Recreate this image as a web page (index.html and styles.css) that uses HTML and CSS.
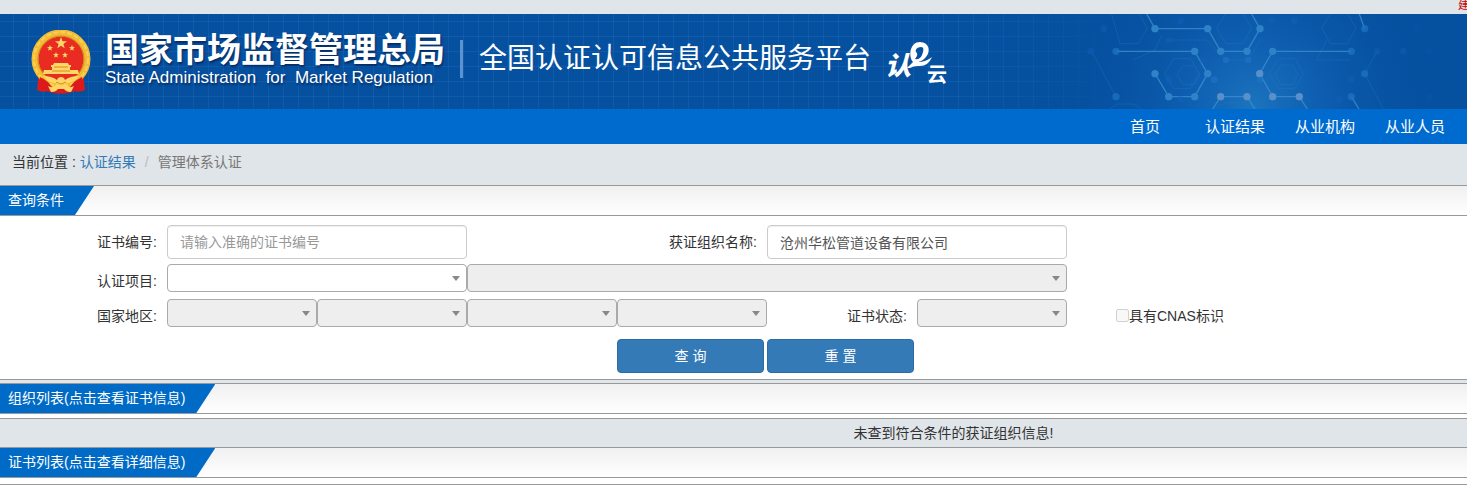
FILE: index.html
```html
<!DOCTYPE html>
<html lang="zh-CN">
<head>
  <meta charset="UTF-8">
  <meta name="viewport" content="width=device-width, initial-scale=1.0">
  <title>全国认证认可信息公共服务平台</title>
  <link rel="stylesheet" href="styles.css">
</head>
<body>
<div class="topbar"><span class="notice">建</span></div>

<header class="header">
  <svg class="emblem" viewBox="0 0 60 64" aria-hidden="true">
    <path d="M8 42 L6 60 Q11 63 16 61 Q30 66 44 61 Q49 63 54 60 L52 42Z" fill="#dc1a1c"/>
    <path d="M10 50 l2 11 M50 50 l-2 11" stroke="#a00f16" stroke-width="1"/>
    <circle cx="30" cy="29" r="26" fill="#e92b22" stroke="#f3bb35" stroke-width="7"/>
    <circle cx="30" cy="29" r="27" fill="none" stroke="#fbd153" stroke-width="2" stroke-dasharray="5 2"/>
    <circle cx="30" cy="29" r="23" fill="none" stroke="#c98518" stroke-width="1"/>
    <path d="M9 47 Q17 50 22 59 H38 Q43 50 51 47 L53 60 Q49 62 44 61 Q30 66 16 61 Q11 62 7 60z" fill="#dc1a1c"/>
    <g fill="#ffd766">
      <path d="M30 7 l1.5 4.2 4.5 .1 -3.6 2.7 1.3 4.3 -3.7 -2.5 -3.7 2.5 1.3 -4.3 -3.6 -2.7 4.5 -.1z"/>
      <path id="star" d="M19 15 l.8 2.1 2.2 .1 -1.8 1.4 .7 2.2 -1.9 -1.3 -1.9 1.3 .7 -2.2 -1.8 -1.4 2.2 -.1z"/>
      <use href="#star" x="22"/>
      <use href="#star" x="6" y="7"/>
      <use href="#star" x="15" y="7"/>
      <path d="M23 33 h14 l1 2 h2 v2 h-1 v3 h8 l1 4 H12 l1 -4 h8 v-3 h-1 v-2 h2z"/>
      <path d="M12 46 Q21 46 26 50 Q27 47 30 47 Q33 47 34 50 Q39 46 48 46 Q43 53 36 53 L30 55 L24 53 Q17 53 12 46z"/>
      <path d="M17 56 Q22 59 26 54 L30 56 L34 54 Q38 59 43 56 L40 62 Q35 62 33 59 H27 Q25 62 20 62z"/>
    </g>
    <path d="M23 37 h14 M21 41 h18 M25 52 l5 2 l5 -2" fill="none" stroke="#d98b20" stroke-width="1"/>
  </svg>
  <div class="agency">
    <div class="agency-name">国家市场监督管理总局</div>
    <div class="agency-en">State Administration&nbsp; for&nbsp; Market Regulation</div>
  </div>
  <h1 class="platform">全国认证认可信息公共服务平台</h1>
  <div class="cloud-logo">
    <span class="cloud-ren">认</span>
    <svg class="cloud-e" viewBox="0 0 26 28" aria-hidden="true">
      <path fill-rule="evenodd" d="M0 27 Q3 24 6 21 C1 15 3 1 13 1 C22 1 24 10 19 16 Q16 20 11 21 Q19 21 25 16 Q21 26 11 25 Q6 25 3 27z M8 18 Q13 19 15 14 C17 9 17 6 14 6 C10 6 8 9 9 11 Q12 13 8 18z" fill="#fff"/>
    </svg>
    <span class="cloud-yun">云</span>
  </div>
  <svg class="molecule" viewBox="0 42 1281 285" aria-hidden="true">
    <defs>
      <radialGradient id="glow" gradientUnits="userSpaceOnUse" cx="640" cy="320" r="560">
        <stop offset="0" stop-color="#1b74bd"/>
        <stop offset=".35" stop-color="#0f60b3" stop-opacity=".9"/>
        <stop offset="1" stop-color="#0650a0" stop-opacity="0"/>
      </radialGradient>
    </defs>
    <rect y="42" width="1281" height="285" fill="url(#glow)"/>
    <g fill="none" stroke="#2c7fc4" stroke-width="3" opacity=".3">
      <path d="M530 85 L558 40 H608 L635 85 L608 131 H558z M845 85 L872 40 H922 L948 85 L922 131 H872z"/>
      <path d="M374 221 L401 176 H452 L477 221 L452 266 H401z M412 224 L429 198 H463 L480 224 L463 254 H429z"/>
      <path d="M688 221 L715 176 H765 L790 221 L765 266 H715z M706 224 L722 195 H758 L774 224 L758 254 H722z"/>
      <path d="M215 42 L240 131 H295 L322 85 L298 42 M158 160 L228 290 M974 221 L1012 154 M974 221 L1030 327 M520 327 L558 308 H625 L650 327 M210 327 L232 312 H282 L302 327"/>
      <path d="M365 105 L345 150 L280 180 M386 120 H500 L558 180 H625 L660 121 M860 120 L830 180 H930"/>
    </g>
    <g fill="none" stroke="#3f91cf" stroke-width="4" opacity=".75">
      <path d="M320 42 L345 86 H503 L542 154 H621 L660 86 L635 42"/>
      <path d="M228 154 H464 L503 221 L464 290 H386 L345 221"/>
      <path d="M934 154 H698 L659 221 L698 290 H778 L802 327"/>
      <path d="M518 327 L542 290 H621 L645 327 M958 42 L974 86 M934 290 L957 327"/>
    </g>
    <g fill="#2e83c8">
      <circle cx="345" cy="86" r="11"/><circle cx="503" cy="86" r="11"/>
      <circle cx="660" cy="86" r="11"/><circle cx="542" cy="154" r="11"/>
      <circle cx="621" cy="154" r="11"/><circle cx="464" cy="154" r="11"/>
      <circle cx="698" cy="154" r="11"/><circle cx="503" cy="221" r="11"/>
      <circle cx="345" cy="221" r="11"/><circle cx="386" cy="290" r="11"/>
      <circle cx="464" cy="290" r="11"/>
    </g>
    <g fill="#5b8fca">
      <circle cx="659" cy="221" r="11"/><circle cx="542" cy="290" r="11"/>
      <circle cx="621" cy="290" r="11"/><circle cx="698" cy="290" r="11"/>
      <circle cx="778" cy="290" r="11"/>
    </g>
    <g fill="#1f73c4" opacity=".7">
      <circle cx="228" cy="154" r="11"/><circle cx="228" cy="290" r="11"/>
      <circle cx="934" cy="154" r="11"/><circle cx="974" cy="86" r="11"/>
      <circle cx="974" cy="221" r="11"/><circle cx="934" cy="290" r="11"/>
      <circle cx="558" cy="180" r="10"/><circle cx="625" cy="180" r="10"/>
      <circle cx="523" cy="239" r="10"/><circle cx="660" cy="240" r="10"/>
    </g>
    <g fill="#1263bd" opacity=".4">
      <circle cx="191" cy="86" r="10"/><circle cx="152" cy="154" r="10"/>
      <circle cx="1012" cy="154" r="10"/><circle cx="1090" cy="154" r="10"/>
      <circle cx="694" cy="62" r="10"/>
      <circle cx="763" cy="62" r="10"/><circle cx="660" cy="121" r="10"/>
      <circle cx="490" cy="180" r="10"/><circle cx="490" cy="298" r="10"/>
      <circle cx="422" cy="298" r="10"/><circle cx="386" cy="239" r="10"/>
      <circle cx="897" cy="298" r="10"/><circle cx="934" cy="239" r="10"/>
      <circle cx="422" cy="62" r="10"/><circle cx="386" cy="121" r="10"/>
    </g>
    <g fill="#1263bd" opacity=".15">
      <circle cx="1168" cy="154" r="10"/><circle cx="1130" cy="86" r="10"/>
      <circle cx="1168" cy="290" r="10"/>
    </g>
  </svg>
</header>

<nav class="nav">
  <a href="#">首页</a>
  <a href="#">认证结果</a>
  <a href="#">从业机构</a>
  <a href="#">从业人员</a>
</nav>

<div class="breadcrumb">
  <span>当前位置 :</span>
  <a href="#">认证结果</a>
  <span class="slash">/</span>
  <span class="current">管理体系认证</span>
</div>

<h2 class="section-title"><span>查询条件</span></h2>
<form class="search-form">
  <div class="row">
    <label for="certNo">证书编号:</label>
    <input class="text-input span-2" id="certNo" type="text" placeholder="请输入准确的证书编号">
    <label class="span-2" for="orgName">获证组织名称:</label>
    <input class="text-input span-2" id="orgName" type="text" value="沧州华松管道设备有限公司">
  </div>
  <div class="row row-select">
    <label for="project">认证项目:</label>
    <select class="span-2" id="project"></select>
    <select class="span-4" aria-label="认证项目" disabled></select>
  </div>
  <div class="row row-select">
    <label for="country">国家地区:</label>
    <select id="country" disabled></select>
    <select aria-label="省" disabled></select>
    <select aria-label="市" disabled></select>
    <select aria-label="区县" disabled></select>
    <label for="status">证书状态:</label>
    <select id="status" disabled></select>
    <div class="check span-2">
      <input id="cnas" type="checkbox" disabled>
      <label for="cnas">具有CNAS标识</label>
    </div>
  </div>
  <div class="row row-buttons">
    <button class="btn btn-search" type="button">查 询</button>
    <button class="btn" type="button">重 置</button>
  </div>
</form>

<h2 class="section-title"><span>组织列表(点击查看证书信息)</span></h2>
<div class="result">
  <p>未查到符合条件的获证组织信息!</p>
</div>

<h2 class="section-title"><span>证书列表(点击查看详细信息)</span></h2>
<div class="result result-empty"></div>
</body>
</html>
```
FILE: styles.css
```css
* {
  box-sizing: border-box;
  margin: 0;
  padding: 0;
}

body {
  background-color: #e0e5e9;
  color: #333;
  font-family: "Liberation Sans", "Noto Sans CJK SC", sans-serif;
  font-size: 14px;
  line-height: 20px;
}

a {
  text-decoration: none;
}

input,
select,
button {
  font: inherit;
}

.topbar {
  display: flex;
  justify-content: flex-end;
  height: 14px;
  overflow: hidden;
}

/* notice runs past the right edge */
.notice {
  width: 9px;
  color: #c00;
  font-size: 12px;
  line-height: 10px;
  white-space: nowrap;
}

.header {
  position: relative;
  display: flex;
  align-items: flex-start;
  height: 95px;
  padding: 16px 0 0 31px;
  overflow: hidden;
  color: #fff;
  white-space: nowrap;
  background-color: #0650a0;
  background-image:
    linear-gradient(90deg, transparent 65%, #0650a0 77%),
    linear-gradient(rgba(50, 130, 210, 0.2) 1px, transparent 1px),
    linear-gradient(90deg, rgba(50, 130, 210, 0.2) 1px, transparent 1px);
  background-size: auto, 15px 15px, 15px 15px;
  background-position: 0 0, 0 7px, 13px 0;
}

.header > * {
  flex-shrink: 0;
}

.emblem {
  width: 60px;
  height: 64px;
}

.agency {
  width: 355px;
  margin-left: 14px;
  text-shadow: 1px 2px 2px rgba(0, 20, 60, 0.6);
}

.agency-name {
  font-size: 34px;
  font-weight: bold;
  line-height: 40px;
}

.agency-en {
  font-size: 17px;
  line-height: 16px;
}

.platform {
  margin-top: 10px;
  padding-left: 16px;
  border-left: 3px solid #5c93cf;
  font-size: 28px;
  font-weight: normal;
  line-height: 38px;
}

.cloud-logo {
  display: flex;
  margin: 11px 0 0 14px;
}

.cloud-ren {
  margin-top: 12px;
  font-size: 26px;
  font-style: italic;
  font-weight: 900;
  line-height: 26px;
}

.cloud-e {
  width: 26px;
  height: 28px;
  margin-left: -4px;
}

.cloud-yun {
  margin: 24px 0 0 -6px;
  font-size: 20px;
  font-weight: bold;
  line-height: 20px;
}

.molecule {
  position: absolute;
  top: 0;
  right: 0;
  width: 427px;
  height: 95px;
}

.nav {
  display: flex;
  justify-content: flex-end;
  padding-right: 7px;
  background-color: #006bcf;
}

.nav a {
  width: 90px;
  color: #fff;
  font-size: 15px;
  line-height: 35px;
  text-align: center;
}

.breadcrumb {
  display: flex;
  gap: 4px;
  height: 41px;
  padding: 8px 12px;
}

.breadcrumb a {
  color: #337ab7;
}

.breadcrumb .slash {
  padding: 0 5px;
  color: #bbb;
}

.breadcrumb .current {
  color: #777;
}

.section-title {
  border-top: 1px solid #999;
  border-bottom: 1px solid #999;
  background-image: linear-gradient(#f0f0f0, #fff);
  font-size: 14px;
  font-weight: normal;
  line-height: 29px;
}

.section-title span {
  display: block;
  width: fit-content;
  padding: 0 30px 0 8px;
  color: #fff;
  background-color: #006bc6;
  clip-path: polygon(0 0, 100% 0, calc(100% - 19px) 100%, 0 100%);
}

.search-form {
  display: grid;
  padding: 9px 100px 6px 17px;
  margin-bottom: 3px;
  border-bottom: 1px solid #999;
  background-color: #fff;
}

.row {
  display: grid;
  grid-template-columns: repeat(9, 1fr);
  align-items: center;
  margin-bottom: 5px;
}

.row > label {
  padding-right: 10px;
  text-align: right;
}

.row-select {
  margin-bottom: 7px;
}

.row-select > label,
.check {
  padding-top: 5px;
}

.span-2 {
  grid-column: span 2;
}

.span-4 {
  grid-column: span 4;
}

.text-input {
  width: 100%;
  height: 34px;
  padding: 6px 12px;
  border: 1px solid #ccc;
  border-radius: 4px;
  color: #555;
  background-color: #fff;
  box-shadow: inset 0 1px 1px rgba(0, 0, 0, 0.07);
}

.text-input::placeholder {
  color: #999;
}

select {
  width: 100%;
  height: 28px;
  border: 1px solid #aaa;
  border-radius: 4px;
  appearance: none;
  background: #fff url("data:image/svg+xml,%3Csvg xmlns='http://www.w3.org/2000/svg' width='8' height='5'%3E%3Cpath d='M0 0h8L4 5z' fill='%23888'/%3E%3C/svg%3E") no-repeat right 6px center;
}

select:disabled {
  background-color: #eee;
  opacity: 1;
}

.check {
  display: flex;
  align-items: center;
  padding-left: 49px;
  white-space: nowrap;
}

.check input {
  width: 13px;
  height: 13px;
}

.row-buttons {
  margin: 5px 0 0;
}

.btn {
  height: 34px;
  margin-right: 3px;
  border: 1px solid #2e6da4;
  border-radius: 4px;
  color: #fff;
  background-color: #337ab7;
  cursor: pointer;
}

.btn-search {
  grid-column-start: 5;
}

.btn:hover {
  background-color: #286090;
}

.result {
  border-top: 4px solid #fff;
}

.result p {
  padding: 4px 0 4px 30%;
  border-top: 1px solid #999;
  text-align: center;
}

.result-empty {
  height: 7px;
  border-top: 6px solid #fff;
  background-color: #999;
}
```
